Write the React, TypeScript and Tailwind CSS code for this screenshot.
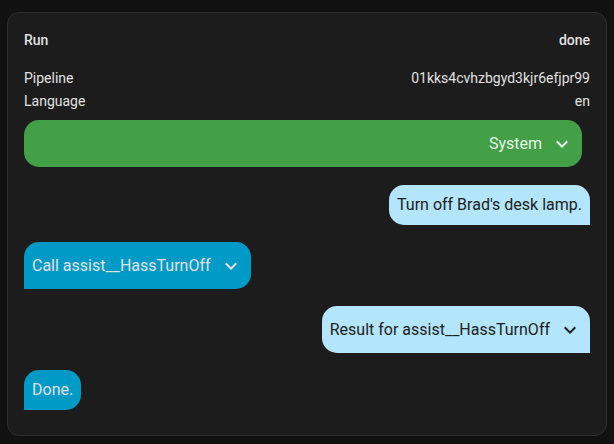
function Chevron() {
  // mdi chevron-down
  return (
    <svg viewBox="0 0 24 24" className="h-6 w-6 shrink-0" fill="currentColor">
      <path d="M7.41,8.58L12,13.17L16.59,8.58L18,10L12,16L6,10L7.41,8.58Z" />
    </svg>
  );
}

function InfoRow({ label, value, strong }: { label: string; value: string; strong?: boolean }) {
  return (
    <div className={`flex justify-between ${strong ? 'h-[22px] font-medium' : 'h-[23px]'} items-center`}>
      <span>{label}</span>
      <span>{value}</span>
    </div>
  );
}

export default function App() {
  return (
    <div
      className="min-h-[444px] w-full bg-[#111111] px-[7px] pt-3"
      style={{ fontFamily: 'Roboto, "Noto Sans", sans-serif' }}
    >
      <div className="rounded-xl border border-[#2f2f2f] bg-[#1c1c1c] px-4 pt-4 pb-[25px] text-sm text-[#e1e1e1]">
        <InfoRow label="Run" value="done" strong />
        <div className="mt-[15px]">
          <InfoRow label="Pipeline" value="01kks4cvhzbgyd3kjr6efjpr99" />
          <InfoRow label="Language" value="en" />
        </div>

        <div className="mt-[8px] flex flex-col text-base">
          {/* system prompt */}
          <div className="mr-2 flex items-center justify-end rounded-[15px] bg-[#43a047] p-2 text-[#e8f5e9]">
            <div className="flex h-[31px] items-center gap-2">
              <span>System</span>
              <Chevron />
            </div>
          </div>

          <div className="mt-[18px] self-end rounded-[15px] rounded-br-none bg-[#b3e5fc] p-2 leading-6 text-[#212121]">
            Turn off Brad's desk lamp.
          </div>

          <div className="mt-[17px] self-start rounded-[15px] rounded-bl-none bg-[#009ac7] p-2 text-[#e1e1e1]">
            <div className="flex h-[31px] items-center gap-2">
              <span>Call assist__HassTurnOff</span>
              <Chevron />
            </div>
          </div>

          <div className="mt-[17px] self-end rounded-[15px] rounded-br-none bg-[#b3e5fc] p-2 text-[#212121]">
            <div className="flex h-[31px] items-center gap-2">
              <span>Result for assist__HassTurnOff</span>
              <Chevron />
            </div>
          </div>

          <div className="mt-[17px] self-start rounded-[15px] rounded-bl-none bg-[#009ac7] p-2 leading-6 text-[#e1e1e1]">
            Done.
          </div>
        </div>
      </div>
    </div>
  );
}
